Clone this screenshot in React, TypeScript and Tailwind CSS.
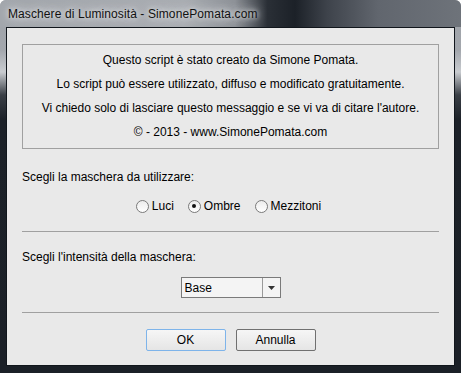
import React from "react";

const font = "font-['Liberation_Sans',Arial,sans-serif]";

const Radio = ({ label, checked }: { label: string; checked?: boolean }) => (
    <label className="flex items-center gap-[3px]">
        <span className="flex h-[13px] w-[13px] items-center justify-center rounded-full border border-[#7a7a7a] bg-[linear-gradient(#ececec,#ffffff)]">
            {checked && <span className="h-[4px] w-[4px] rounded-full bg-[#111]" />}
        </span>
        <span>{label}</span>
    </label>
);

const App = () => {
    return (
        <div
            className={`relative flex h-[373px] w-[461px] flex-col overflow-hidden rounded-t-[6px] bg-[linear-gradient(180deg,#9ea2a8_0px,#a3a7ad_50px,#c9ccd0_72px,#3a3f46_95px,#1c2128_120px,#1b2027_100%)] px-[6px] pb-[7px] text-[12px] text-black ${font}`}
        >
            {/* Title bar */}
            <div className="mx-[-6px] flex h-[27px] items-center bg-[linear-gradient(90deg,#a2a6ac_0%,#a9adb2_40%,#8d9197_51%,#2a2f36_58%,#1c2128_64%,#3e434b_71%,#61666e_82%,#6e737a_100%)] pl-[8px]">
                <span className="text-[12px] tracking-[0.1px] text-[#111] [text-shadow:0_0_8px_#d8dadc,0_0_12px_#d8dadc,0_0_4px_#e0e2e4]">
                    Maschere di Luminosità - SimonePomata.com
                </span>
            </div>

            {/* Content */}
            <div className="flex flex-1 flex-col border border-[#11161c] bg-[#e9e9e9] px-[15px] pt-[16px]">
                <div className="flex h-[105px] flex-col items-center justify-center gap-[8px] border border-[#a0a0a0] pb-[1px] leading-[16px]">
                    <p>Questo script è stato creato da Simone Pomata.</p>
                    <p>Lo script può essere utilizzato, diffuso e modificato gratuitamente.</p>
                    <p>Vi chiedo solo di lasciare questo messaggio e se vi va di citare l'autore.</p>
                    <p>© - 2013 - www.SimonePomata.com</p>
                </div>

                <p className="mt-[20px] leading-[16px]">Scegli la maschera da utilizzare:</p>
                <div className="mt-[13px] flex h-[16px] items-center justify-center gap-[14px] pr-[4px]">
                    <Radio label="Luci" />
                    <Radio label="Ombre" checked />
                    <Radio label="Mezzitoni" />
                </div>
                <div className="mt-[17px] h-px bg-[#a0a0a0]" />

                <p className="mt-[17px] leading-[16px]">Scegli l'intensità della maschera:</p>
                <div className="mt-[12px] flex justify-center">
                    <div className="flex h-[21px] w-[100px] border border-[#7a7a7a] bg-[#f4f4f4]">
                        <span className="flex flex-1 items-center pl-[3px]">Base</span>
                        <span className="flex w-[18px] items-center justify-center border-l border-[#9a9a9a]">
                            <svg width="7" height="4" viewBox="0 0 7 4">
                                <path d="M0 0h7L3.5 4z" fill="#333" />
                            </svg>
                        </span>
                    </div>
                </div>
                <div className="mt-[14px] h-px bg-[#a0a0a0]" />

                <div className="mt-[16px] flex justify-center gap-[10px]">
                    <button className="h-[22px] w-[80px] rounded-[2px] border border-[#7eb4ea] bg-[linear-gradient(#f6f6f6,#e5e5e5)]">
                        OK
                    </button>
                    <button className="h-[22px] w-[80px] rounded-[2px] border border-[#707070] bg-[linear-gradient(#f6f6f6,#e5e5e5)]">
                        Annulla
                    </button>
                </div>
            </div>
        </div>
    );
};

export default App;
